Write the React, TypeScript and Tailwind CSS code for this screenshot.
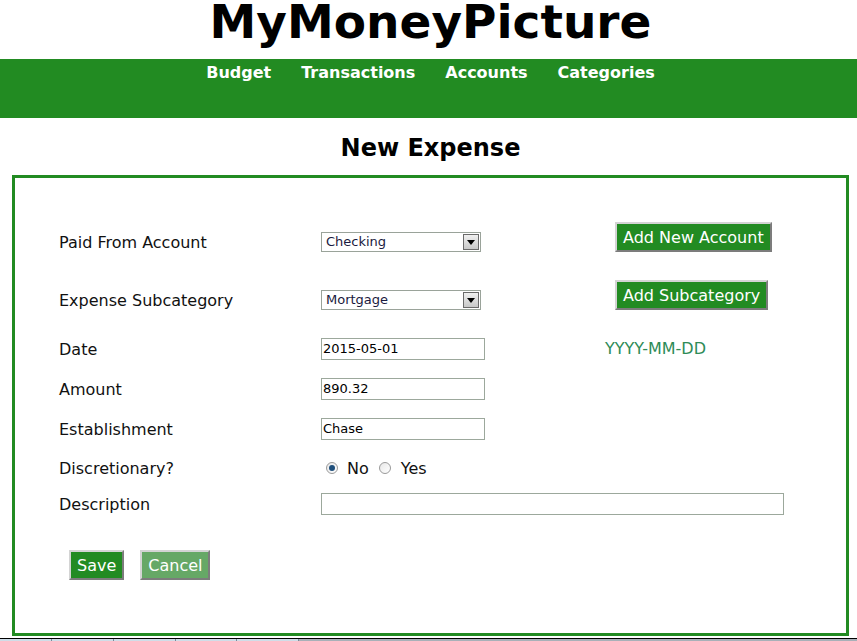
import React from "react";

const green = "bg-[#228b22]";

function FakeSelect({ value }: { value: string }) {
  return (
    <div className="ml-[1px] flex h-[20px] w-[160px] items-center border border-[#9aa39a] bg-white">
      <span className="flex-1 pl-[4px] text-[13px] leading-[16px] text-[#1a1a40]">{value}</span>
      <span className="mr-[1px] flex h-[16px] w-[16px] items-center justify-center border border-[#6a6a6a] bg-gradient-to-b from-[#f0f0f0] to-[#c8c8c8]">
        <svg width="8" height="5" viewBox="0 0 8 5">
          <path d="M0 0 H8 L4 5 Z" fill="#000" />
        </svg>
      </span>
    </div>
  );
}

function TextBox({ value, w = "w-[164px]" }: { value: string; w?: string }) {
  return (
    <div className={`ml-[1px] flex h-[22px] ${w} items-center border border-[#9ca89c] bg-white pl-[1px] text-[13px] leading-[16px] text-black`}>
      {value}
    </div>
  );
}

function GreenButton({ label, light }: { label: string; light?: boolean }) {
  return (
    <button
      type="button"
      className={`h-[30px] border-2 border-t-[#d4d4d4] border-l-[#d4d4d4] border-b-[#7c7c7c] border-r-[#7c7c7c] px-[6px] text-[16px] leading-[19px] text-white ${
        light ? "bg-[#66a866]" : green
      }`}
    >
      {label}
    </button>
  );
}

function Radio({ checked }: { checked?: boolean }) {
  return (
    <span className="flex h-[12px] w-[12px] items-center justify-center rounded-full border border-[#9a9a9a] bg-gradient-to-br from-[#e8e8e8] to-[#ffffff]">
      {checked && <span className="h-[6px] w-[6px] rounded-full bg-[#1f4f7c]" />}
    </span>
  );
}

function Row({
  label,
  h,
  mt,
  control,
  extra,
  extraTop,
}: {
  label: string;
  h: string;
  mt?: string;
  control: React.ReactNode;
  extra?: React.ReactNode;
  extraTop?: boolean;
}) {
  return (
    <div className={`flex ${h} ${mt ?? ""} items-center`}>
      <div className="w-[261px] text-[16px] leading-[19px] text-[#111]">{label}</div>
      <div className="flex w-[285px] items-center">{control}</div>
      {extra && <div className={extraTop ? "self-start" : ""}>{extra}</div>}
    </div>
  );
}

export default function App() {
  return (
    <div className="h-[641px] w-[857px] overflow-hidden bg-white font-['DejaVu_Sans','Verdana',sans-serif]">
      <div className="h-[59px] pl-[4px] text-center text-[47px] font-bold leading-[44px] text-black">
        MyMoneyPicture
      </div>

      <nav className={`flex h-[59px] justify-center gap-[30px] pl-[4px] pt-[4px] text-[16px] font-bold leading-[19px] text-white ${green}`}>
        <span>Budget</span>
        <span>Transactions</span>
        <span>Accounts</span>
        <span>Categories</span>
      </nav>

      <h1 className="mt-[16px] h-[28px] pl-[4px] text-center text-[24px] font-bold leading-[28px] text-black">
        New Expense
      </h1>

      <div className="ml-[12px] mt-[13px] h-[461px] w-[837px] border-[3px] border-[#228b22] pl-[44px] pt-[44px]">
        <Row
          label="Paid From Account"
          h="h-[40px]"
          control={<FakeSelect value="Checking" />}
          extra={
            <div className="ml-[10px]">
              <GreenButton label="Add New Account" />
            </div>
          }
          extraTop
        />
        <Row
          label="Expense Subcategory"
          h="h-[40px]"
          mt="mt-[18px]"
          control={<FakeSelect value="Mortgage" />}
          extra={
            <div className="ml-[10px]">
              <GreenButton label="Add Subcategory" />
            </div>
          }
          extraTop
        />
        <Row
          label="Date"
          h="h-[40px]"
          mt="mt-[9px]"
          control={<TextBox value="2015-05-01" />}
          extra={<span className="text-[16px] leading-[19px] text-[#2e8b57]">YYYY-MM-DD</span>}
        />
        <Row label="Amount" h="h-[40px]" control={<TextBox value="890.32" />} />
        <Row label="Establishment" h="h-[40px]" control={<TextBox value="Chase" />} />
        <Row
          label="Discretionary?"
          h="h-[38px]"
          control={
            <div className="ml-[6px] flex items-center text-[16px] leading-[19px] text-[#111]">
              <Radio checked />
              <span className="ml-[9px]">No</span>
              <span className="ml-[10px]">
                <Radio />
              </span>
              <span className="ml-[10px]">Yes</span>
            </div>
          }
        />
        <Row
          label="Description"
          h="h-[34px]"
          control={
            <div className="w-[600px]">
              <TextBox value="" w="w-[463px]" />
            </div>
          }
        />

        <div className="mt-[29px] flex gap-[16px] pl-[10px]">
          <GreenButton label="Save" />
          <GreenButton label="Cancel" light />
        </div>
      </div>

      <div className="mt-[2px] h-[1px] bg-black" />
      <div className="flex h-[3px]">
        <div className="w-[52px] border-r border-[#7a8a9a] bg-[#cfdde8]" />
        <div className="w-[62px] border-r border-[#7a8a9a] bg-[#cfdde8]" />
        <div className="w-[62px] border-r border-[#7a8a9a] bg-[#cfdde8]" />
        <div className="w-[61px] border-r border-[#7a8a9a] bg-[#cfdde8]" />
        <div className="w-[62px] border-r border-[#7a8a9a] bg-[#cfdde8]" />
        <div className="flex-1 bg-[#a8b0b8]" />
      </div>
    </div>
  );
}
